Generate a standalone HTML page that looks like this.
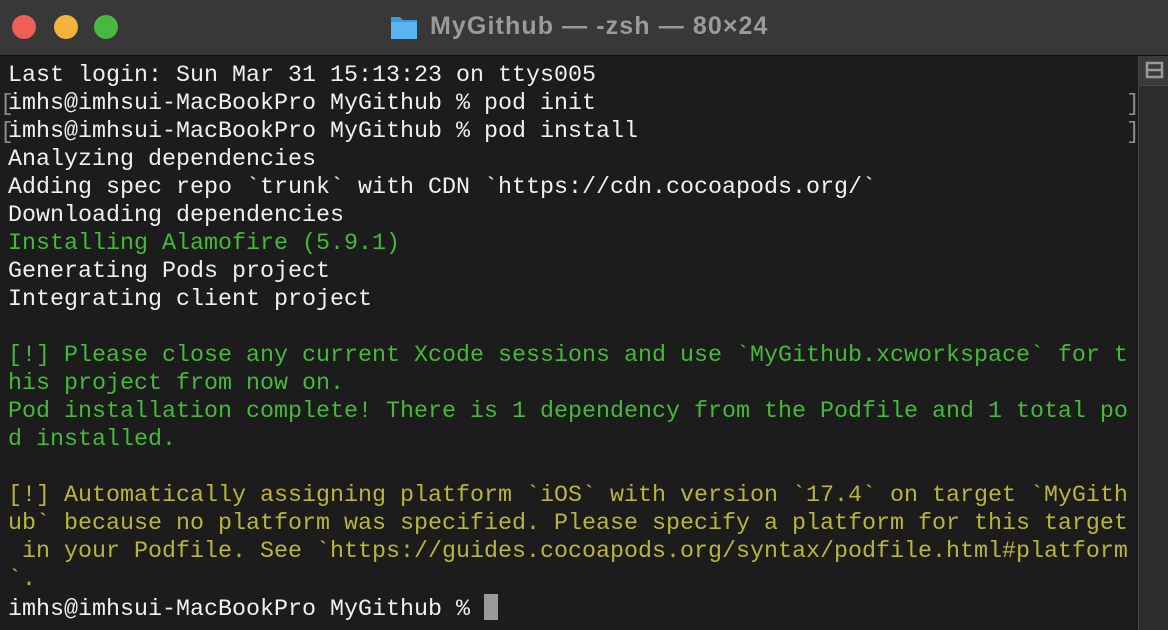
<html><head><style>
body{margin:0;width:1168px;height:630px;background:#1c1c1c;overflow:hidden;position:relative;font-family:"Liberation Sans",sans-serif}
.tb{position:absolute;left:0;top:0;width:1168px;height:55px;background:#383838;border-bottom:1px solid #0e0e0e}
.d{position:absolute;top:15px;width:24px;height:24px;border-radius:50%}
.title{position:absolute;left:430px;top:12px;font-size:25px;font-weight:bold;color:#9a9a9a;letter-spacing:1.1px}
.sb{position:absolute;left:1138px;top:56px;width:30px;height:574px;background:#2d2d2d;border-left:1px solid #444}
.sbb{position:absolute;left:0;top:0;width:30px;height:29px;background:#3a3a3a;border-bottom:1px solid #4a4a4a}
pre{position:absolute;left:8px;top:62px;margin:0;font-family:"Liberation Mono",monospace;font-size:23.33px;line-height:28px;color:#f0f0f0}
.g{color:#46b83a}.y{color:#b9b53a}
.cur{display:inline-block;width:14px;height:26px;background:#9a9a9a;vertical-align:-5px}
.br{position:absolute;color:#8a8a8a;font-family:"Liberation Mono",monospace;font-size:23px}
</style></head><body>
<div class="tb">
<div class="d" style="left:12px;background:#ee5f57"></div>
<div class="d" style="left:54px;background:#f4b33c"></div>
<div class="d" style="left:94px;background:#4ab742"></div>
<svg style="position:absolute;left:390px;top:14px" width="28" height="26"><path d="M1 3h9l3 3h14v19H1z" fill="#3a9be0"/><rect x="1" y="8" width="26" height="17" fill="#5ab4f0"/></svg>
<div class="title">MyGithub — -zsh — 80×24</div>
</div>
<div class="sb"><div class="sbb"><svg width="30" height="29"><rect x="8" y="7" width="15" height="14" fill="none" stroke="#999" stroke-width="2.5"/><line x1="8" y1="14" x2="23" y2="14" stroke="#999" stroke-width="2.5"/></svg></div></div>
<div class="br" style="left:1126px;top:91px">]</div><div class="br" style="left:1126px;top:119px">]</div>
<div class="br" style="left:0;top:91px">[</div><div class="br" style="left:0;top:119px">[</div>
<pre>Last login: Sun Mar 31 15:13:23 on ttys005
imhs@imhsui-MacBookPro MyGithub % pod init
imhs@imhsui-MacBookPro MyGithub % pod install
Analyzing dependencies
Adding spec repo `trunk` with CDN `https://cdn.cocoapods.org/`
Downloading dependencies
<span class="g">Installing Alamofire (5.9.1)</span>
Generating Pods project
Integrating client project

<span class="g">[!] Please close any current Xcode sessions and use `MyGithub.xcworkspace` for t
his project from now on.
Pod installation complete! There is 1 dependency from the Podfile and 1 total po
d installed.</span>

<span class="y">[!] Automatically assigning platform `iOS` with version `17.4` on target `MyGith
ub` because no platform was specified. Please specify a platform for this target
 in your Podfile. See `https://guides.cocoapods.org/syntax/podfile.html#platform
`.</span>
imhs@imhsui-MacBookPro MyGithub % <span class="cur"></span></pre>
</body></html>
